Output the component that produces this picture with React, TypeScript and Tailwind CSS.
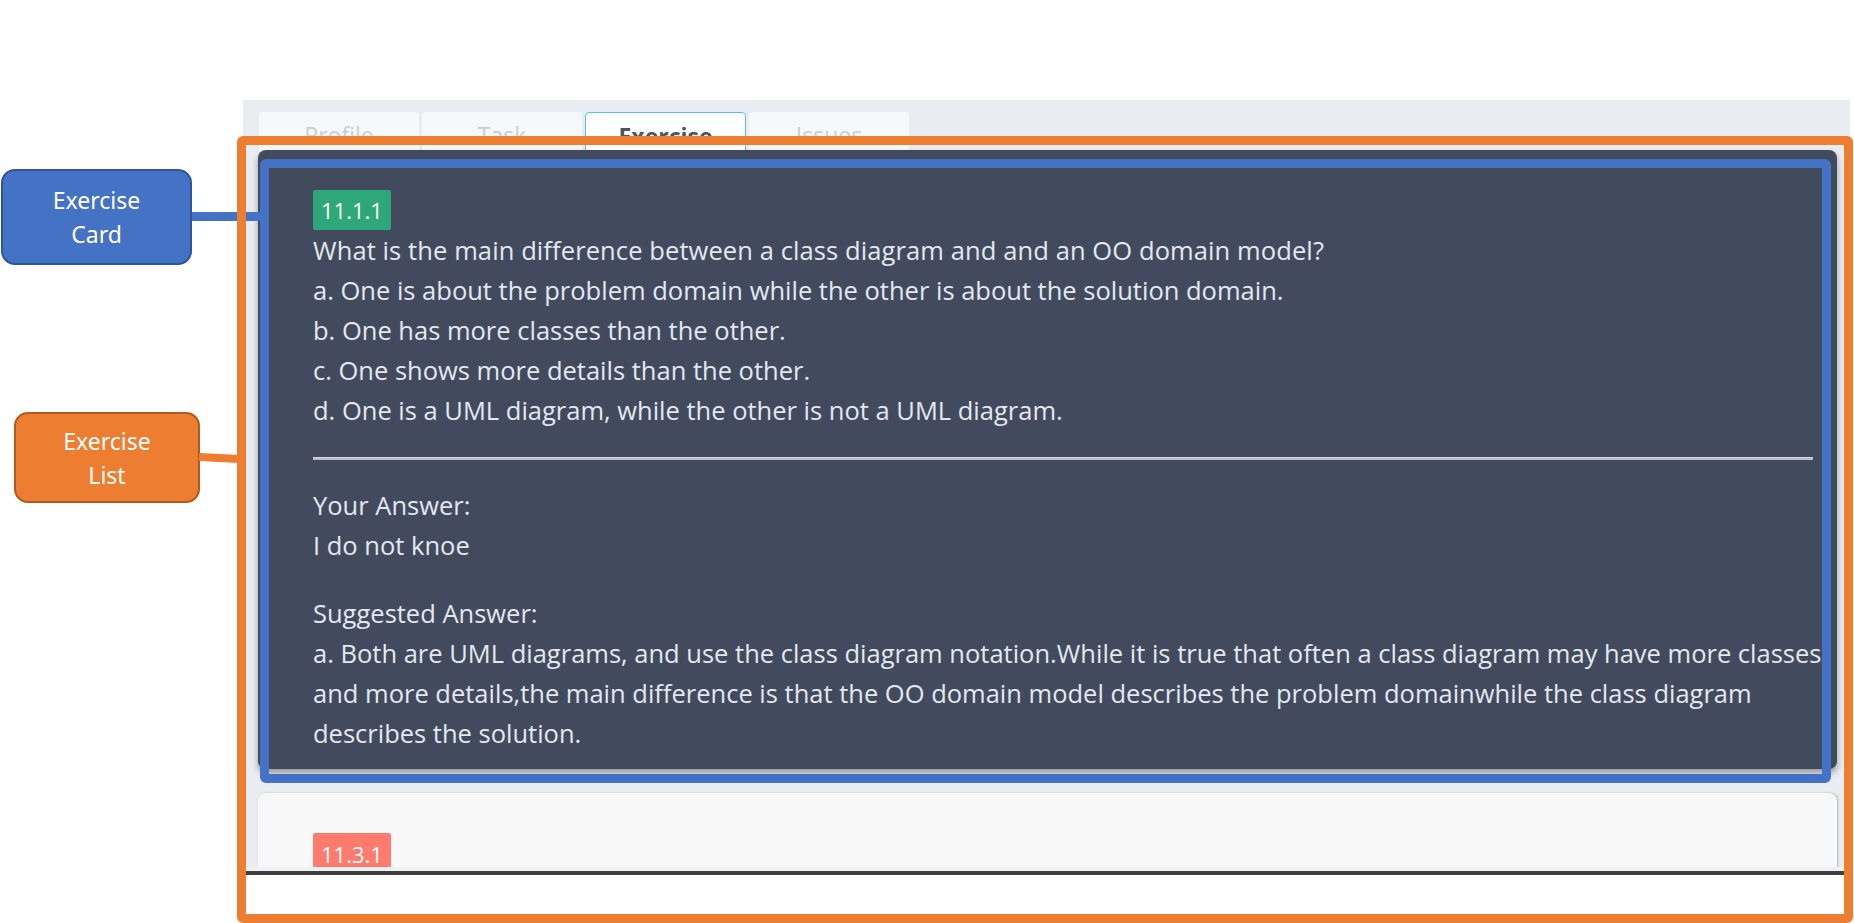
const tabs = ['Profile', 'Task', 'Exercise', 'Issues'];

const options = [
  'a. One is about the problem domain while the other is about the solution domain.',
  'b. One has more classes than the other.',
  'c. One shows more details than the other.',
  'd. One is a UML diagram, while the other is not a UML diagram.',
];

const suggested = [
  'a. Both are UML diagrams, and use the class diagram notation.While it is true that often a class diagram may have more classes',
  'and more details,the main difference is that the OO domain model describes the problem domainwhile the class diagram',
  'describes the solution.',
];

function Tabs() {
  return (
    <div className="flex gap-[3px] h-[38px] pl-[1px]">
      {tabs.map((t) =>
        t === 'Exercise' ? (
          <div
            key={t}
            className="w-[161px] h-[40px] bg-white border border-[#4fc3f7] rounded-t-[4px] flex justify-center pt-[6px] text-[23px] font-bold text-[#4a5568]"
          >
            {t}
          </div>
        ) : (
          <div
            key={t}
            className="w-[160px] h-[40px] bg-[#f7f8fa] rounded-t-[4px] flex justify-center pt-[6px] text-[23px] text-[#c9ced6]"
          >
            {t}
          </div>
        )
      )}
    </div>
  );
}

function ExerciseCard() {
  return (
    <div className="relative bg-[#424b5d] rounded-[8px] shadow-[0_4px_6px_rgba(0,0,0,0.35)] pt-[40px] pb-[16px] pl-[55px] pr-[24px] text-[#e2e8f0] text-[25.5px] leading-[40px]">
      <span className="inline-block align-top bg-[#2ea87a] text-white text-[22px] rounded-[2px] px-[8px] h-[40px] leading-[40px]">11.1.1</span>
      <div className="tracking-[0.1px]">What is the main difference between a class diagram and and an OO domain model?</div>
      {options.map((o) => (
        <div key={o}>{o}</div>
      ))}
      <div className="mt-[27px] mb-[25px] h-[3px] bg-[#b9bec7] border-t border-[#d4d8de]" />
      <div>Your Answer:</div>
      <div>I do not knoe</div>
      <div className="mt-[28px]">Suggested Answer:</div>
      {suggested.map((s) => (
        <div key={s} className="whitespace-nowrap">{s}</div>
      ))}
    </div>
  );
}

export default function App() {
  return (
    <div className="relative w-[1854px] h-[923px] bg-white overflow-hidden font-['Open_Sans',sans-serif]">
      <div className="ml-[243px] mt-[100px] w-[1607px] h-[767px] bg-[#e9ecf1] pl-[15px] pr-[13px] pt-[12px] overflow-hidden flex flex-col">
        <Tabs />
        <ExerciseCard />
        <div className="mt-[24px] bg-[#f8f8f8] rounded-t-[8px] h-[120px] pt-[40px] pl-[55px] shadow-[1px_0_2px_rgba(0,0,0,0.25)]">
          <span className="inline-block bg-[#ff7b6e] text-white text-[22px] rounded-[2px] px-[8px] h-[42px] leading-[42px]">11.3.1</span>
        </div>
      </div>
      <div className="ml-[243px] w-[1607px] h-[4px] bg-[#eef0f3]" />
      <div className="ml-[243px] w-[1607px] h-[4px] bg-[#3f3f3f]" />

      {/* annotation: card */}
      <div className="absolute left-[1px] top-[169px] w-[191px] h-[96px] bg-[#4472c4] border-2 border-[#2f5597] rounded-[14px] flex flex-col items-center justify-center text-white text-[23px] leading-[34px] font-['Noto_Sans',sans-serif]">
        <span>Exercise</span>
        <span>Card</span>
      </div>
      <div className="absolute left-[192px] top-[212px] w-[68px] h-[9px] bg-[#4472c4]" />
      <div className="absolute left-[260px] top-[159px] w-[1571px] h-[624px] border-[9px] border-[#4472c4] rounded-[6px]" />

      {/* annotation: list */}
      <div className="absolute left-[14px] top-[412px] w-[186px] h-[91px] bg-[#ed7d31] border-2 border-[#ae5a21] rounded-[14px] flex flex-col items-center justify-center text-white text-[23px] leading-[34px] font-['Noto_Sans',sans-serif]">
        <span>Exercise</span>
        <span>List</span>
      </div>
      <svg className="absolute left-0 top-0" width="260" height="923">
        <line x1="199" y1="457" x2="240" y2="459" stroke="#ed7d31" strokeWidth="8" />
      </svg>
      <div className="absolute left-[237px] top-[136px] w-[1616px] h-[787px] border-[9px] border-[#ed7d31] rounded-[6px]" />
    </div>
  );
}
